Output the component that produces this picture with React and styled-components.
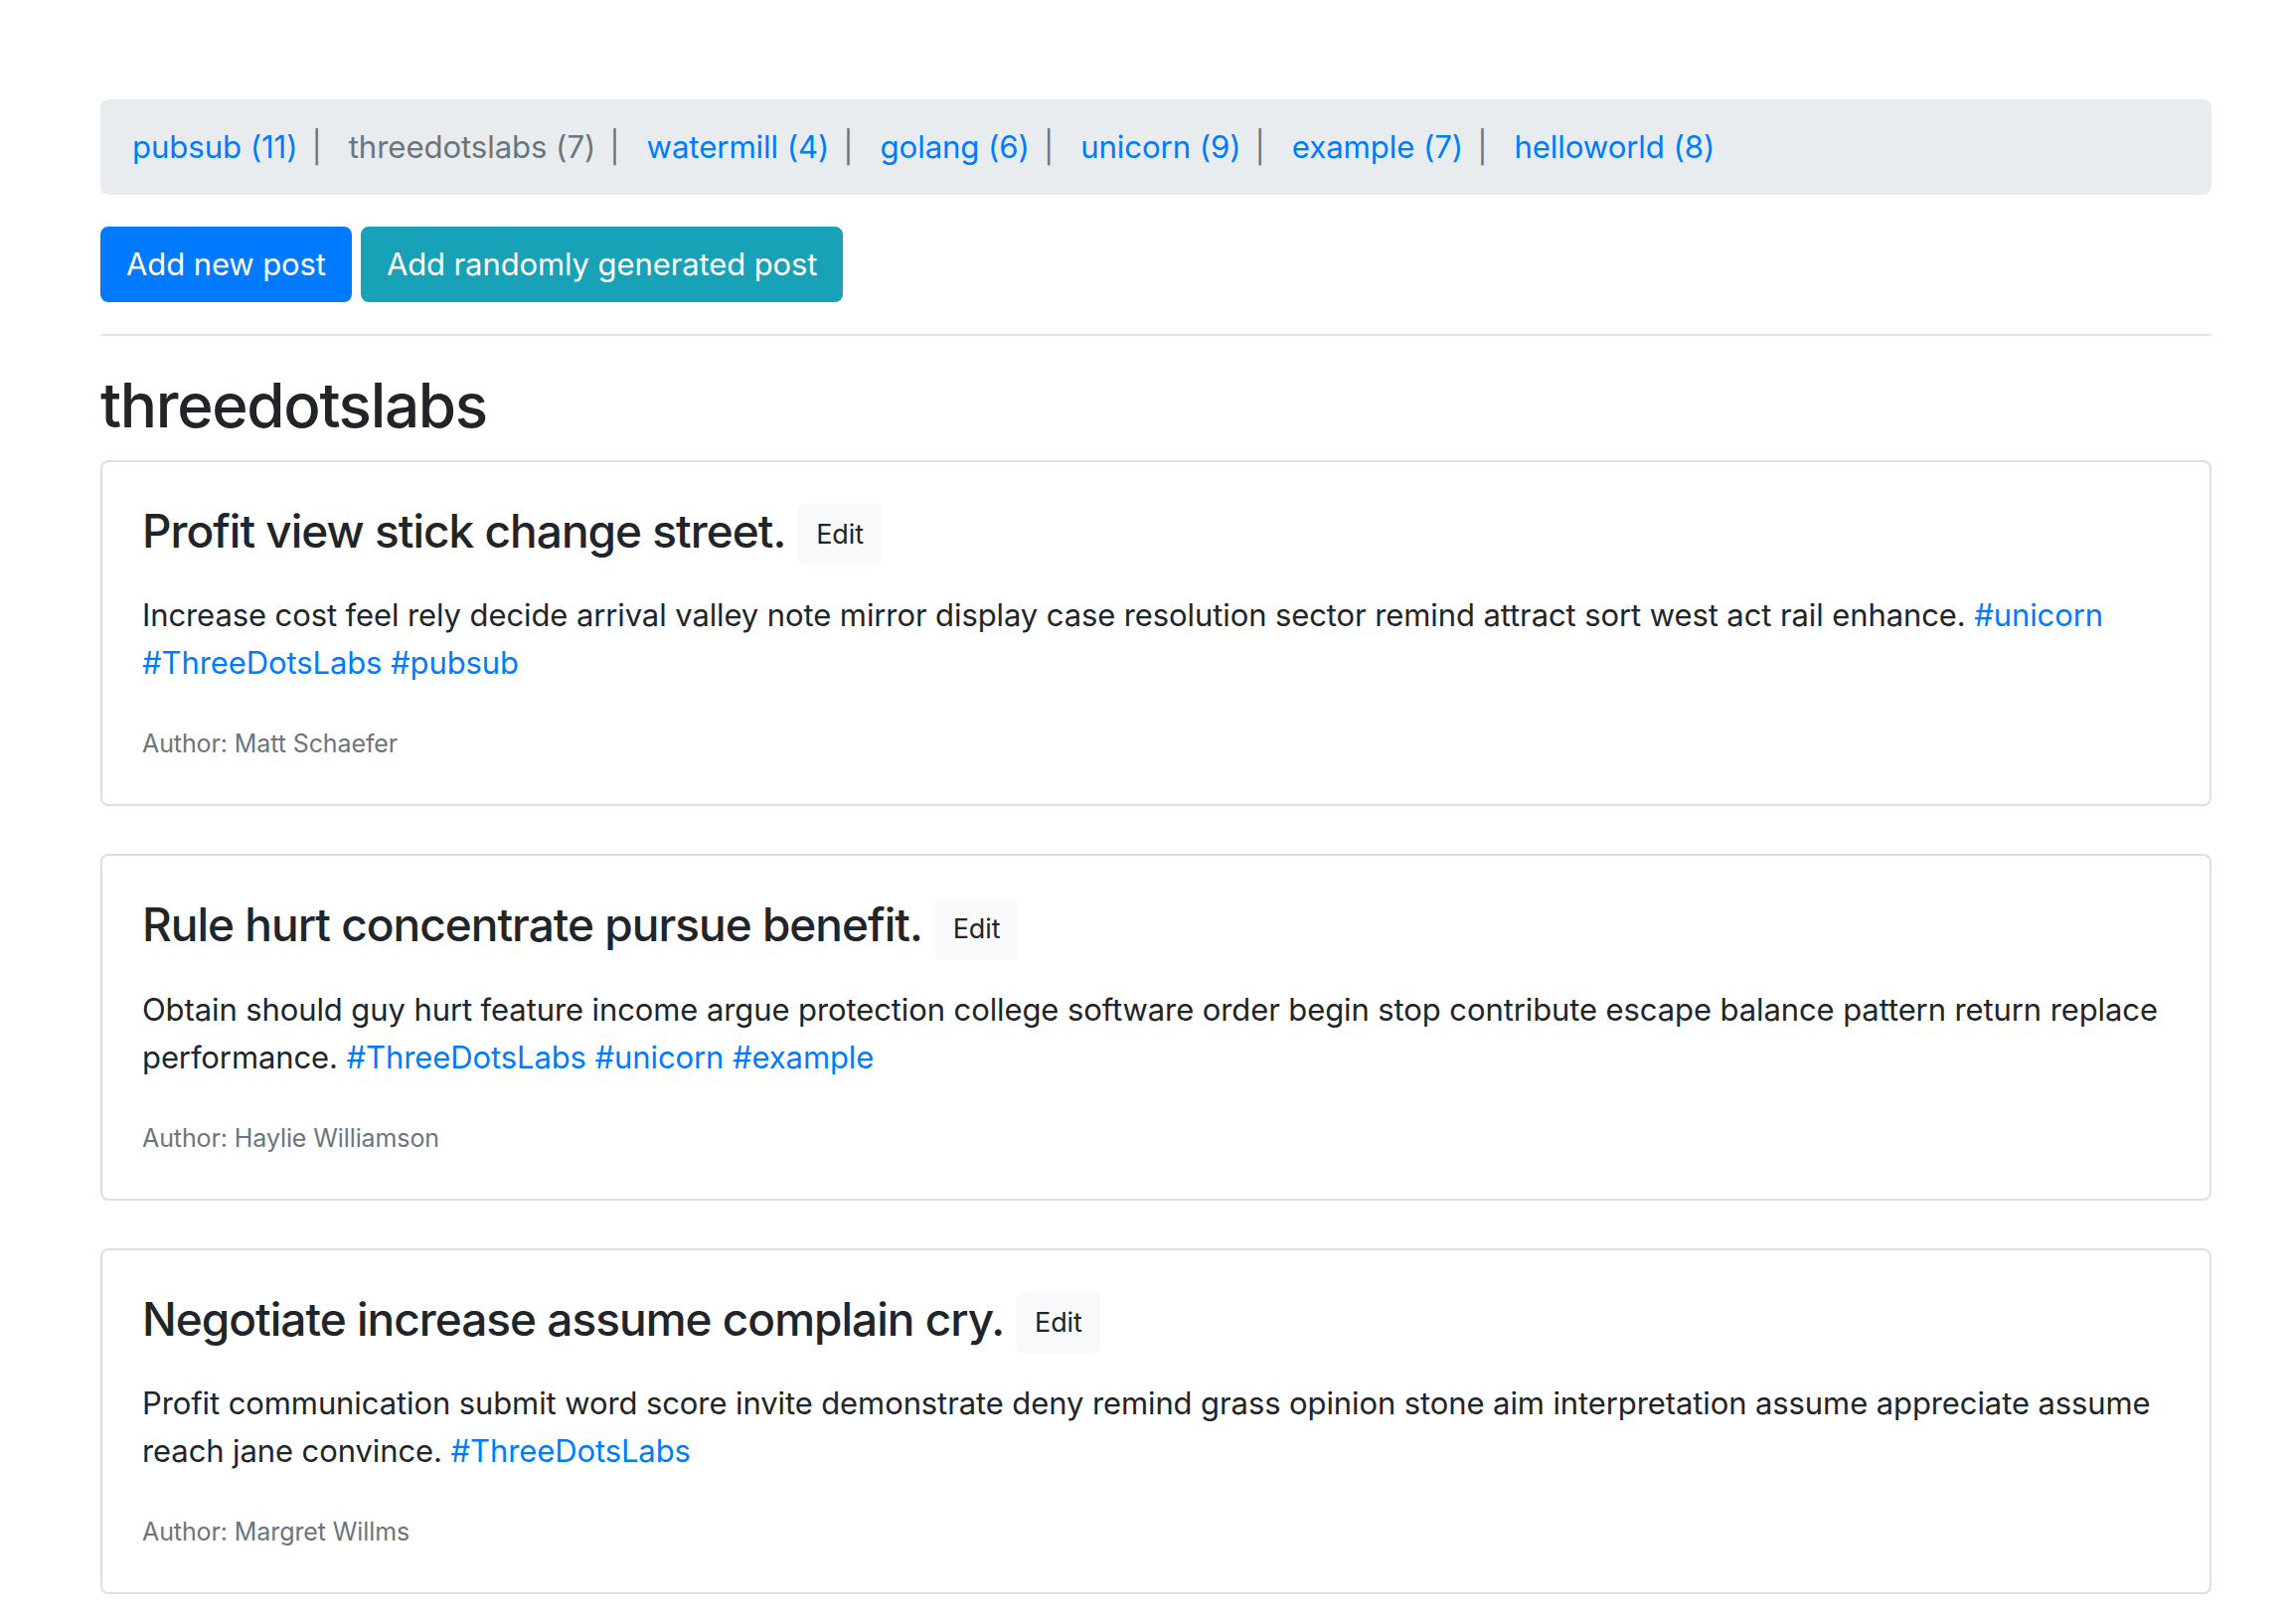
import React from "react";
import styled, { createGlobalStyle } from "styled-components";

const Global = createGlobalStyle`
  html, body { margin: 0; padding: 0; background: #fff; }
  body {
    font-family: Inter, "Noto Sans", "Liberation Sans", sans-serif;
    font-size: 31px;
    line-height: 48px;
    letter-spacing: -0.1px;
    color: #212529;
  }
  *, *::before, *::after { box-sizing: border-box; }
`;

const Container = styled.main`
  width: 2124px;
  margin: 100px 0 0 101px;
`;

const TagBar = styled.nav`
  display: flex;
  flex-wrap: wrap;
  align-items: center;
  background: #e9ecef;
  border-radius: 8px;
  padding: 24px 32px;
  margin-bottom: 32px;
  font-size: 31.2px;
`;

const TagLink = styled.a`
  color: ${(p) => (p.$active ? "#6c757d" : "#007bff")};
  text-decoration: none;
  cursor: pointer;
`;

const Sep = styled.span`
  color: #6c757d;
  margin: 0 27px 0 14px;
`;

const Actions = styled.div`
  display: flex;
  gap: 9px;
`;

const Button = styled.button`
  font-family: inherit;
  font-size: 31px;
  letter-spacing: -0.1px;
  line-height: 48px;
  padding: 12px 24px;
  border: 2px solid ${(p) => p.$bg};
  background: ${(p) => p.$bg};
  color: #fff;
  border-radius: 8px;
  cursor: pointer;
`;

const Divider = styled.hr`
  border: 0;
  border-top: 2px solid rgba(0, 0, 0, 0.1);
  margin: 32px 0;
`;

const GroupTitle = styled.h2`
  font-size: 62px;
  font-weight: 500;
  letter-spacing: -1.35px;
  line-height: 76.8px;
  margin: 0 0 16px;
`;

const Card = styled.article`
  border: 2px solid rgba(0, 0, 0, 0.125);
  border-radius: 8px;
  padding: 41px 40px 37px;
  margin-bottom: 48px;
`;

const PostTitle = styled.h4`
  font-size: 46px;
  font-weight: 500;
  letter-spacing: -1px;
  line-height: 57.6px;
  margin: 0 0 26px;
`;

const EditButton = styled.button`
  display: inline-block;
  vertical-align: middle;
  font-family: inherit;
  font-size: 27px;
  font-weight: 400;
  letter-spacing: -0.1px;
  line-height: 42px;
  padding: 8px 16px;
  margin-left: 2px;
  border: 2px solid #f8f9fa;
  background: #f8f9fa;
  color: #212529;
  border-radius: 6px;
  cursor: pointer;
`;

const Body = styled.p`
  margin: 0 0 33px;
`;

const Hashtag = styled.a`
  color: #007bff;
  text-decoration: none;
`;

const Author = styled.p`
  margin: 0;
  font-size: 25px;
  line-height: 48px;
  color: #6c757d;
`;

const tags = [
  ["pubsub", 11],
  ["threedotslabs", 7, true],
  ["watermill", 4],
  ["golang", 6],
  ["unicorn", 9],
  ["example", 7],
  ["helloworld", 8],
];

const posts = [
  {
    title: "Profit view stick change street.",
    body: "Increase cost feel rely decide arrival valley note mirror display case resolution sector remind attract sort west act rail enhance.",
    tags: ["unicorn", "ThreeDotsLabs", "pubsub"],
    author: "Matt Schaefer",
  },
  {
    title: "Rule hurt concentrate pursue benefit.",
    body: "Obtain should guy hurt feature income argue protection college software order begin stop contribute escape balance pattern return replace performance.",
    tags: ["ThreeDotsLabs", "unicorn", "example"],
    author: "Haylie Williamson",
  },
  {
    title: "Negotiate increase assume complain cry.",
    body: "Profit communication submit word score invite demonstrate deny remind grass opinion stone aim interpretation assume appreciate assume reach jane convince.",
    tags: ["ThreeDotsLabs"],
    author: "Margret Willms",
  },
];

export default function App() {
  return (
    <>
      <Global />
      <Container>
        <TagBar>
          {tags.map(([name, count, active], i) => (
            <React.Fragment key={name}>
              {i > 0 && <Sep>|</Sep>}
              <TagLink $active={active}>
                {name} ({count})
              </TagLink>
            </React.Fragment>
          ))}
        </TagBar>
        <Actions>
          <Button $bg="#007bff">Add new post</Button>
          <Button $bg="#17a2b8">Add randomly generated post</Button>
        </Actions>
        <Divider />
        <GroupTitle>threedotslabs</GroupTitle>
        {posts.map((p) => (
          <Card key={p.title}>
            <PostTitle>
              {p.title} <EditButton>Edit</EditButton>
            </PostTitle>
            <Body>
              {p.body}
              {p.tags.map((t) => (
                <React.Fragment key={t}>
                  {" "}
                  <Hashtag>#{t}</Hashtag>
                </React.Fragment>
              ))}
            </Body>
            <Author>Author: {p.author}</Author>
          </Card>
        ))}
      </Container>
    </>
  );
}
